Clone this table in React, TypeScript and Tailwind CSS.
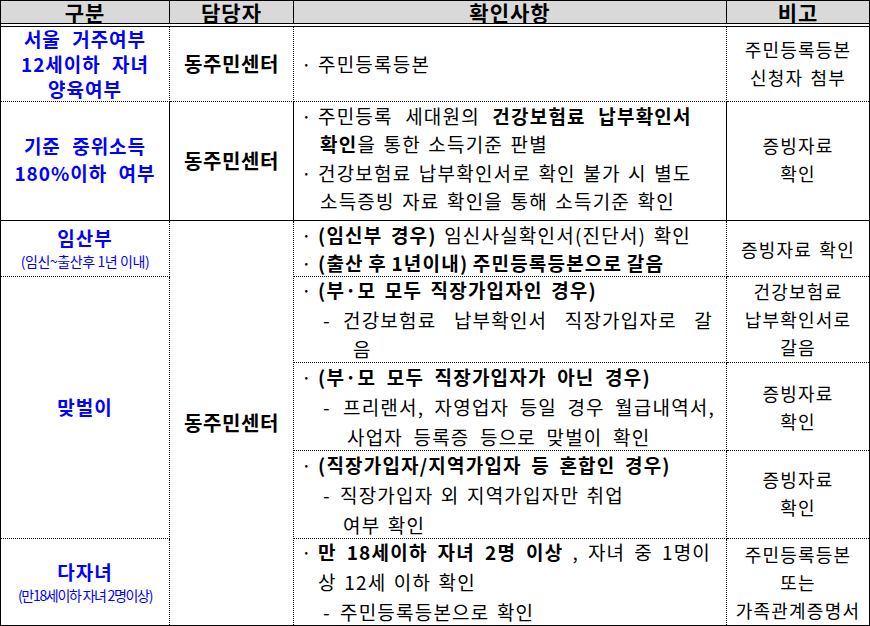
import React from "react";

const Bul = ({ children, j, w }: { children: React.ReactNode; j?: boolean; w?: number }) => (
  <div className="flex whitespace-nowrap">
    <span className="ml-[7px] w-[17px] shrink-0">·</span>
    {j ? (
      <span className="inline-block text-justify [text-align-last:justify]" style={{ width: w }}>
        {children}
      </span>
    ) : (
      <span>{children}</span>
    )}
  </div>
);

const Dash = ({ children, j, w, tw = 20 }: { children: React.ReactNode; j?: boolean; w?: number; tw?: number }) => (
  <div className="flex whitespace-nowrap">
    <span className="ml-[29px] shrink-0" style={{ width: tw }}>-</span>
    {j ? (
      <span className="inline-block text-justify [text-align-last:justify]" style={{ width: w }}>
        {children}
      </span>
    ) : (
      <span>{children}</span>
    )}
  </div>
);

const Ind = ({ children, l }: { children: React.ReactNode; l: number }) => (
  <div className="whitespace-nowrap" style={{ paddingLeft: l }}>
    {children}
  </div>
);

const Bd = ({ children }: { children: React.ReactNode }) => (
  <b className="font-bold [word-spacing:3px]">{children}</b>
);

export default function App() {
  const c1 = "border-r border-dotted border-black flex flex-col items-center justify-center text-center text-[#0000ff] font-bold text-[19px] tracking-[1px] [word-spacing:6px]";
  const c2 = "border-r border-dotted border-black flex items-center justify-center font-bold text-[20px] tracking-[0.6px]";
  const c3 = "border-r border-dotted border-black flex flex-col justify-center text-[19px] tracking-[1.2px] [word-spacing:2px] leading-[29.5px]";
  const c4 = "flex flex-col items-center justify-center text-center text-[18px] tracking-[1.2px] [word-spacing:2px] leading-[28px]";
  const bb = "border-b border-dotted border-black";
  const bs = "border-b border-solid border-black";
  return (
    <div className="w-[870px] h-[626px] bg-white border border-black flex flex-col font-['Noto_Sans_CJK_KR',sans-serif] text-black overflow-hidden">
      <div className="grid grid-cols-[169px_124px_433px_142px] h-[23px] shrink-0 bg-[#d9d9d9] border-b border-black text-[21px] font-bold leading-[22px] tracking-[1px]">
        <div className="border-r border-black flex items-center justify-center">구분</div>
        <div className="border-r border-black flex items-center justify-center">담당자</div>
        <div className="border-r border-black flex items-center justify-center">확인사항</div>
        <div className="flex items-center justify-center">비고</div>
      </div>
      <div className="h-[2px] shrink-0" />
      <div className="grid grid-cols-[169px_124px_433px_142px] grid-rows-[75px_119px_56px_86px_88px_88px_86px] border-t border-black flex-1">
        {/* row 1 */}
        <div className={`${c1} ${bb} leading-[25px] pb-[2px]`}>
          <div>서울 거주여부</div>
          <div>12세이하 자녀</div>
          <div>양육여부</div>
        </div>
        <div className={`${c2} ${bb}`}>동주민센터</div>
        <div className={`${c3} ${bb}`}>
          <Bul>주민등록등본</Bul>
        </div>
        <div className={`${c4} ${bb} pb-[3px]`}>
          <div>주민등록등본</div>
          <div>신청자 첨부</div>
        </div>

        {/* row 2 */}
        <div className={`${c1} ${bs} leading-[27px] pb-[4px]`}>
          <div>기준 중위소득</div>
          <div>180%이하 여부</div>
        </div>
        <div className={`${c2} ${bs}`}>동주민센터</div>
        <div className={`${c3} ${bs} !justify-start !leading-[28.4px]`}>
          <Bul>
            <span className="[word-spacing:7px]">
              주민등록 세대원의 <b className="font-bold">건강보험료 납부확인서</b>
            </span>
          </Bul>
          <Ind l={26}>
            <Bd>확인</Bd>을 통한 소득기준 판별
          </Ind>
          <Bul>건강보험료 납부확인서로 확인 불가 시 별도</Bul>
          <Ind l={26}>소득증빙 자료 확인을 통해 소득기준 확인</Ind>
        </div>
        <div className={`${c4} ${bs} pb-[4px]`}>
          <div>증빙자료</div>
          <div>확인</div>
        </div>

        {/* 임산부 */}
        <div className={`${c1} ${bb}`}>
          <div className="leading-[25px]">임산부</div>
          <div className="leading-[22px] font-normal text-[14px] tracking-[-0.4px] [word-spacing:0px]">(임신~출산후 1년 이내)</div>
        </div>
        <div className={`${c2} row-span-5`}>동주민센터</div>
        <div className={`${c3} ${bb} !leading-[28px]`}>
          <Bul>
            <Bd>(임신부 경우)</Bd> 임신사실확인서(진단서) 확인
          </Bul>
          <Bul>
            <b className="font-bold [word-spacing:-1px]">(출산 후 1년이내) 주민등록등본으로 갈음</b>
          </Bul>
        </div>
        <div className={`${c4} ${bb}`}>
          <div>증빙자료 확인</div>
        </div>

        {/* 맞벌이 */}
        <div className={`${c1} ${bb} row-span-3 col-start-1 row-start-4`}>
          <div>맞벌이</div>
        </div>
        <div className={`${c3} ${bb} col-start-3 row-start-4`}>
          <Bul>
            <Bd>(부·모 모두 직장가입자인 경우)</Bd>
          </Bul>
          <Dash j w={370}>건강보험료 납부확인서 직장가입자로 갈</Dash>
          <Ind l={59}>음</Ind>
        </div>
        <div className={`${c4} ${bb} col-start-4 row-start-4 pb-[2px]`}>
          <div>건강보험료</div>
          <div>납부확인서로</div>
          <div>갈음</div>
        </div>

        <div className={`${c3} ${bb} col-start-3 row-start-5 !leading-[30px]`}>
          <Bul>
            <span className="font-bold [word-spacing:5px]">(부·모 모두 직장가입자가 아닌 경우)</span>
          </Bul>
          <Dash j w={372}>프리랜서, 자영업자 등일 경우 월급내역서,</Dash>
          <Ind l={53}>
            <span className="[word-spacing:5px]">사업자 등록증 등으로 맞벌이 확인</span>
          </Ind>
        </div>
        <div className={`${c4} ${bb} col-start-4 row-start-5`}>
          <div>증빙자료</div>
          <div>확인</div>
        </div>

        <div className={`${c3} ${bb} col-start-3 row-start-6 !leading-[30px]`}>
          <Bul>
            <span className="font-bold [word-spacing:4px]">(직장가입자/지역가입자 등 혼합인 경우)</span>
          </Bul>
          <Dash tw={17}>직장가입자 외 지역가입자만 취업</Dash>
          <Ind l={49}>여부 확인</Ind>
        </div>
        <div className={`${c4} ${bb} col-start-4 row-start-6 pb-[4px]`}>
          <div>증빙자료</div>
          <div>확인</div>
        </div>

        {/* 다자녀 */}
        <div className={`${c1} col-start-1 row-start-7`}>
          <div className="leading-[25px]">다자녀</div>
          <div className="leading-[22px] font-normal text-[14px] tracking-[-1.3px] [word-spacing:0px]">(만18세이하 자녀 2명이상)</div>
        </div>
        <div className={`${c3} col-start-3 row-start-7 !leading-[30px]`}>
          <Bul j w={393}>
            <Bd>만 18세이하 자녀 2명 이상</Bd> , 자녀 중 1명이
          </Bul>
          <Ind l={24}>상 12세 이하 확인</Ind>
          <Dash tw={17}>주민등록등본으로 확인</Dash>
        </div>
        <div className={`${c4} col-start-4 row-start-7`}>
          <div>주민등록등본</div>
          <div>또는</div>
          <div>가족관계증명서</div>
        </div>
      </div>
    </div>
  );
}
